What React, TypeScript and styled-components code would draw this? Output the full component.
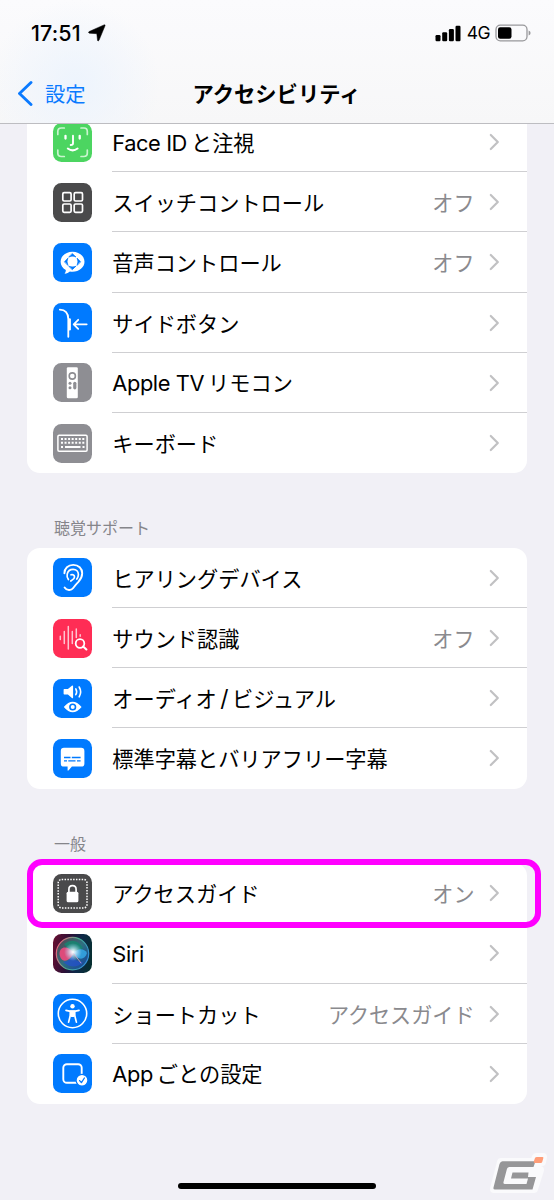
import React from "react";
import styled, { createGlobalStyle, css } from "styled-components";

const GlobalStyle = createGlobalStyle`
  *, *::before, *::after { box-sizing: border-box; }
  html, body { margin: 0; padding: 0; }
  body { background: #f1f0f6; }
`;

const jp = `"Noto Sans CJK JP", sans-serif`;
const latin = `Inter, "Noto Sans CJK JP", sans-serif`;

const Screen = styled.div`
  position: relative;
  width: 554px;
  height: 1200px;
  overflow: hidden;
  display: flex;
  flex-direction: column;
  background: #f1f0f6;
  color: #000;
  font-family: ${jp};
`;

const Header = styled.header`
  position: relative;
  z-index: 2;
  flex: none;
  height: 124px;
  border-bottom: 1px solid #bdbdc1;
  background: radial-gradient(circle at 75px 85px, #edf4fd 0, rgba(243, 247, 252, 0) 85px), linear-gradient(#fbfbfd, #f7f7f8);
`;

const StatusBar = styled.div`
  display: flex;
  align-items: center;
  justify-content: space-between;
  height: 66px;
  padding: 0 23px 0 31px;
`;

const Clock = styled.div`
  display: flex;
  align-items: center;
  gap: 7px;
  font: 500 21.5px/26px ${latin};
  letter-spacing: 0.1px;
`;

const Signals = styled.div`
  display: flex;
  align-items: center;
  font: 400 17.5px/24px ${latin};
`;

const Network = styled.span`
  margin: 0 5px 0 6px;
  letter-spacing: -0.6px;
`;

const NavBar = styled.nav`
  display: grid;
  grid-template-columns: 1fr auto 1fr;
  align-items: center;
  height: 54px;
  padding: 0 18px 0 17px;
`;

const Back = styled.a`
  display: flex;
  align-items: center;
  gap: 12px;
  color: #0a7aff;
  font-size: 20.3px;
  line-height: 30px;
`;

const Title = styled.h1`
  margin: 0;
  font: 700 21.3px/30px ${jp};
`;

const Content = styled.main`
  flex: 1;
  margin-top: -12px;
  padding: 0 27px;
`;

const Card = styled.section`
  border-radius: 13px;
  background: #fff;
`;

const SectionTitle = styled.h2`
  display: flex;
  align-items: flex-end;
  height: 74.65px;
  margin: 0;
  padding: 0 27px 7.6px;
  color: #85858a;
  font: 400 16px/26px ${jp};
`;

const Body = styled.div`
  flex: 1;
  display: flex;
  align-items: center;
  height: 100%;
  margin-left: 20px;
  padding: 1px 27px 0 0;
  border-bottom: 1px solid #cfcfd2;
`;

const Row = styled.div<{ $marked?: boolean }>`
  position: relative;
  display: flex;
  align-items: center;
  height: 60.2px;
  padding-left: 26.3px;
  &:last-child ${Body} { border-bottom-color: transparent; }
  ${(p) =>
    p.$marked &&
    css`
      & ${Body} { border-bottom-color: transparent; }
      &::after {
        content: "";
        position: absolute;
        top: -4.3px;
        left: 0;
        width: 513.5px;
        height: 69px;
        border: 6px solid #ff00ff;
        border-radius: 15px;
      }
    `}
`;

const Label = styled.span`
  flex: 1;
  font-size: 21.2px;
  line-height: 30px;
  white-space: nowrap;
`;

const Latin = styled.span<{ $gap?: number }>`
  font-family: ${latin};
  font-size: 21.8px;
  letter-spacing: -0.4px;
  margin-right: ${(p) => p.$gap ?? 0}px;
`;

const Slash = styled.span`
  margin: 0 3.5px;
  font-family: ${latin};
  font-size: 23px;
`;

const Value = styled.span`
  margin-right: 14.5px;
  color: #8a8a8e;
  font-size: 21.1px;
  line-height: 30px;
`;

const Tile = styled.svg<{ $bg: string }>`
  flex: none;
  display: block;
  width: 39px;
  height: 39px;
  border-radius: 8.5px;
  background: ${(p) => p.$bg};
`;

const HomeIndicator = styled.div`
  position: absolute;
  left: 178px;
  bottom: 11px;
  width: 198px;
  height: 6px;
  border-radius: 3px;
  background: #000;
`;

const Logo = styled.svg`
  position: absolute;
  right: 4px;
  bottom: 2px;
`;

const BLUE = "#007aff";
const DARK = "#4a4a4b";
const GRAY = "#8e8e93";

type IconProps = { bg: string; children: React.ReactNode };
const Icon = ({ bg, children }: IconProps) => (
  <Tile $bg={bg} viewBox="0 0 39 39" fill="none" stroke="#fff" strokeLinecap="round" strokeLinejoin="round">
    {children}
  </Tile>
);

const FaceIcon = () => (
  <Icon bg="#4cd561">
    <g strokeWidth="1.7" stroke="#c9f5cf">
      <path d="M4.8 11.5V8.5Q4.8 5 8.3 5H11.3M28 5h3Q34.3 5 34.3 8.5v3M34.3 27v3q0 3.5-3.5 3.5H28M11.3 33.5h-3q-3.5 0-3.5-3.5v-3" />
    </g>
    <path d="M12.5 12.8v2.8M26.7 12.8v2.8" strokeWidth="2.3" />
    <path d="M20 12.8v7.4q0 1.8-2.3 1.8" strokeWidth="1.9" />
    <path d="M14.8 25.5q4.8 3.8 9.8 0" strokeWidth="2" />
  </Icon>
);

const SwitchIcon = () => (
  <Icon bg={DARK}>
    <g strokeWidth="1.7">
      {[9.8, 21.2].map((x) =>
        [9.7, 21].map((y) => <rect key={`${x}-${y}`} x={x} y={y} width="8.3" height="8.3" rx="1.3" />)
      )}
    </g>
  </Icon>
);

const VoiceIcon = () => (
  <Icon bg={BLUE}>
    <path d="M19.5 8.8c6.7 0 12 4.3 12 9.9s-5.3 10-12 10c-1 0-1.800 0-2.600-.2-1.300 1.200-3 2-5.400 2.200.9-1.100 1.400-2.300 1.300-3.800-3.200-1.800-5.200-4.700-5.200-8.200 0-5.600 5.200-9.900 11.900-9.900z" fill="#fff" stroke="none" />
    <path d="M19.500 10.800l3.400 3.200h-6.800zM19.500 26.400l3.400-3.200h-6.800zM11.700 18.600l3.200-3.400v6.800zM27.300 18.600l-3.200-3.400v6.800z" fill={BLUE} stroke={BLUE} strokeWidth=".8" />
    <circle cx="19.500" cy="18.600" r="5" fill="#fff" stroke="none" />
  </Icon>
);

const SideButtonIcon = () => (
  <Icon bg={BLUE}>
    <path d="M6.800 6.600c5.200.1 8.400 2.800 8.500 9.400v17.800" strokeWidth="1.800" />
    <path d="M16.600 16.500v9.800" strokeWidth="2.600" />
    <path d="M33.700 21.300H21M25.200 16.800l-4.500 4.500 4.500 4.500" strokeWidth="1.800" />
  </Icon>
);

const RemoteIcon = () => (
  <Icon bg={GRAY}>
    <rect x="13.800" y="4.200" width="11" height="31" rx="1.300" fill="#fff" stroke="none" />
    <circle cx="19.300" cy="13" r="3.100" stroke={GRAY} strokeWidth="1.600" />
    <g fill={GRAY} stroke="none">
      <circle cx="17" cy="20.300" r="1.500" />
      <circle cx="17" cy="24.800" r="1.500" />
      <rect x="20.200" y="18.700" width="3.200" height="7.700" rx="1.600" />
    </g>
  </Icon>
);

const KeyboardIcon = () => (
  <Icon bg={GRAY}>
    <rect x="4.900" y="11.300" width="29.200" height="16" rx="1.200" strokeWidth="1.500" />
    <path d="M8 15h23.500M8 18.800h23.500" strokeWidth="2" strokeDasharray="2 1.550" strokeLinecap="butt" />
    <path d="M8 22.900h2M12 22.900h15.500M29.500 22.900h2" strokeWidth="2" strokeLinecap="butt" />
  </Icon>
);

const EarIcon = () => (
  <Icon bg={BLUE}>
    <path d="M11.400 15.300c0-5 3.700-8.400 8.900-8.400s8.900 3.500 8.900 8.400c0 3.800-1.600 6.200-3.800 8.600-2.800 2.800-4.200 4.800-5.400 6.400-1.800 2.400-6.400 2.400-8.400-.8" strokeWidth="1.900" />
    <path d="M15.400 21.500c-1.300-2-1.600-3.700-1.200-5.400.7-3 3-4.700 5.900-4.700 3.300 0 5.300 2.200 5.300 5.100 0 1.900-.7 3.300-1.600 4.600" strokeWidth="1.700" />
    <path d="M18 16.800c1.900-.7 3.500.3 3.500 2.100 0 1.800-1.600 2.500-3.700 4.100" strokeWidth="1.700" />
  </Icon>
);

const SoundIcon = () => (
  <Icon bg="#ff2d55">
    <path d="M7.300 17.300v3.200M11.300 12.500v12M15.300 7.500v22.500M19.300 12.500v12M23.300 10v8.500M27.200 15.700v1.500" strokeWidth="1.500" stroke="#ffc4d0" />
    <circle cx="27" cy="24.500" r="4.300" strokeWidth="1.800" />
    <path d="M30.200 27.500l3.200 3" strokeWidth="2.100" />
  </Icon>
);

const AudioVisualIcon = () => (
  <Icon bg={BLUE}>
    <path d="M11.300 10h3.600l4-3.300q1.200-.8 1.200.5v11.300q0 1.300-1.200.5l-4-3.500h-3.600q-.7 0-.7-.7v-4.100q0-.7.7-.7z" fill="#fff" stroke="none" />
    <path d="M22.800 9.900q1.700 2.900 0 5.800M26.200 8q2.900 4.900 0 9.800" strokeWidth="1.600" />
    <path d="M10.800 28q8.900-10.600 17.800 0-8.900 10.600-17.800 0z" fill="#fff" stroke="none" />
    <circle cx="19.700" cy="28" r="2.800" stroke={BLUE} strokeWidth="1.600" />
  </Icon>
);

const CaptionIcon = () => (
  <Icon bg={BLUE}>
    <path d="M11 8.800h17.200q3.200 0 3.200 3.200V24.400q0 3.200-3.200 3.200H18.900l-3.200 3.600q-1.100 1.100-1.100-.3v-3.300h-3.600q-3.200 0-3.200-3.200v-12.400q0-3.200 3.200-3.200z" fill="#fff" stroke="none" />
    <path d="M11 18.500h6.500M18.800 18.500h8.800M11 21.900h3M15.300 21.900h7.200M24 21.900h3.600" stroke={BLUE} strokeWidth="1.300" strokeLinecap="butt" />
  </Icon>
);

const GuidedIcon = () => (
  <Icon bg={DARK}>
    <rect x="5.200" y="5.400" width="28.800" height="28.600" rx="3.500" strokeWidth="1.500" strokeDasharray="1.500 1.350" strokeLinecap="butt" />
    <rect x="13.600" y="17.800" width="11.800" height="10.400" rx="1.500" fill="#fff" stroke="none" />
    <path d="M15.900 18v-2.700q0-3.700 3.600-3.700t3.600 3.700V18" strokeWidth="1.700" />
  </Icon>
);

const SiriIcon = () => (
  <Icon bg="linear-gradient(100deg, #6b0f30 0, #2a1038 40%, #0c2948 65%, #06302c 100%)">
    <defs>
      <radialGradient id="glow">
        <stop offset="0" stopColor="#fff" />
        <stop offset=".28" stopColor="#e2f5ff" stopOpacity=".8" />
        <stop offset="1" stopColor="#9fdcff" stopOpacity="0" />
      </radialGradient>
      <linearGradient id="orb" x1="0" y1="0" x2="1" y2="1">
        <stop offset="0" stopColor="#5b4048" />
        <stop offset=".5" stopColor="#2f7080" />
        <stop offset="1" stopColor="#123fa0" />
      </linearGradient>
      <linearGradient id="ring" x1="0" y1="0.3" x2="1" y2=".7">
        <stop offset="0" stopColor="#f0627c" />
        <stop offset=".5" stopColor="#48b08c" />
        <stop offset="1" stopColor="#338ddd" />
      </linearGradient>
    </defs>
    <circle cx="19.500" cy="19.600" r="16.200" fill="url(#orb)" stroke="url(#ring)" strokeWidth="1.200" />
    <path d="M11 10q11-8 19 4l-10 6z" fill="#128a70" fillOpacity=".75" stroke="none" />
    <path d="M10 28q8-1 9-8 2 8 11 8-9 9-20 0z" fill="#2450d0" fillOpacity=".7" stroke="none" />
    <path d="M6.500 20c0-8 8-9 14.500-1-5 9-13 11-14.500 1z" fill="#f0487c" fillOpacity=".9" stroke="none" />
    <path d="M20 19c5-5 11-5 14 0-2 7-9 8-14 0z" fill="#35a8e8" fillOpacity=".85" stroke="none" />
    <circle cx="20" cy="18" r="9" fill="url(#glow)" stroke="none" />
    <path d="M21 20l7 9" stroke="#e8a9c8" strokeOpacity=".7" strokeWidth="1" />
  </Icon>
);

const ShortcutIcon = () => (
  <Icon bg={BLUE}>
    <circle cx="19.500" cy="19.500" r="14.200" strokeWidth="1.600" />
    <circle cx="19.500" cy="12.300" r="2.200" fill="#fff" stroke="none" />
    <path d="M13 16.300l4.600 1h3.800l4.600-1" strokeWidth="1.700" />
    <path d="M17.300 17h4.400l.1 4.800 1.600 6.300M17.300 17l-.1 4.800-1.600 6.300" strokeWidth="1.700" />
    <path d="M17.400 17.300h4.200v4.500l-.8 1.200h-2.600l-.8-1.200z" fill="#fff" stroke="none" />
  </Icon>
);

const PerAppIcon = () => (
  <Icon bg={BLUE}>
    <rect x="10.300" y="10.200" width="18.400" height="18.600" rx="3.600" strokeWidth="1.900" />
    <circle cx="29" cy="26.200" r="5.900" fill="#fff" stroke={BLUE} strokeWidth="1.200" />
    <path d="M26.600 26.600l1.800 2 3-4.600" stroke={BLUE} strokeWidth="1.300" />
  </Icon>
);

const Chevron = () => (
  <svg width="11" height="18" viewBox="0 0 11 18" fill="none" stroke="#c1c1c3" strokeWidth="2.200" strokeLinecap="round" strokeLinejoin="round">
    <path d="M1.800 2l7 7-7 7" />
  </svg>
);

type ItemProps = { icon: React.ReactNode; value?: string; marked?: boolean; children: React.ReactNode };
const Item = ({ icon, value, marked, children }: ItemProps) => (
  <Row $marked={marked}>
    {icon}
    <Body>
      <Label>{children}</Label>
      {value && <Value>{value}</Value>}
      <Chevron />
    </Body>
  </Row>
);

export default function App() {
  return (
    <Screen>
      <GlobalStyle />
      <Header>
        <StatusBar>
          <Clock>
            17:51
            <svg width="18" height="18" viewBox="0 0 18 18">
              <path d="M16 .9Q17.500.4 17 1.800L11 16.300q-1 1.600-1.500-.1L8.800 9.700 1.400 9.200Q-.4 8.500 1.200 7.500z" fill="#000" stroke="#000" strokeWidth=".5" />
            </svg>
          </Clock>
          <Signals>
            <svg width="26" height="17" viewBox="0 0 26 17">
              <rect x="0.500" y="10" width="5" height="6.300" rx="1.200" />
              <rect x="7.200" y="7.300" width="5" height="9" rx="1.200" />
              <rect x="13.900" y="4" width="5" height="12.300" rx="1.200" />
              <rect x="20.500" y=".7" width="5" height="15.600" rx="1.200" />
            </svg>
            <Network>4G</Network>
            <svg width="36" height="18" viewBox="0 0 36 18">
              <rect x="1" y="1.200" width="31" height="15.600" rx="4.300" fill="none" stroke="#98989b" strokeWidth="1.300" />
              <rect x="3" y="3.200" width="13.500" height="11.600" rx="2.200" />
              <path d="M33.600 6.500q2 .8 2 2.500t-2 2.500z" fill="#98989b" />
            </svg>
          </Signals>
        </StatusBar>
        <NavBar>
          <Back>
            <svg width="16" height="26" viewBox="0 0 16 26" fill="none" stroke="#0a7aff" strokeWidth="2.900" strokeLinecap="round" strokeLinejoin="round">
              <path d="M14 2.500L2.500 13.500 14 24.500" />
            </svg>
            設定
          </Back>
          <Title>アクセシビリティ</Title>
        </NavBar>
      </Header>
      <Content>
        <Card>
          <Item icon={<FaceIcon />}><Latin $gap={4}>Face ID</Latin>と注視</Item>
          <Item icon={<SwitchIcon />} value="オフ">スイッチコントロール</Item>
          <Item icon={<VoiceIcon />} value="オフ">音声コントロール</Item>
          <Item icon={<SideButtonIcon />}>サイドボタン</Item>
          <Item icon={<RemoteIcon />}><Latin $gap={4}>Apple TV</Latin>リモコン</Item>
          <Item icon={<KeyboardIcon />}>キーボード</Item>
        </Card>
        <SectionTitle>聴覚サポート</SectionTitle>
        <Card>
          <Item icon={<EarIcon />}>ヒアリングデバイス</Item>
          <Item icon={<SoundIcon />} value="オフ">サウンド認識</Item>
          <Item icon={<AudioVisualIcon />}>オーディオ<Slash>/</Slash>ビジュアル</Item>
          <Item icon={<CaptionIcon />}>標準字幕とバリアフリー字幕</Item>
        </Card>
        <SectionTitle>一般</SectionTitle>
        <Card>
          <Item icon={<GuidedIcon />} value="オン" marked>アクセスガイド</Item>
          <Item icon={<SiriIcon />}><Latin>Siri</Latin></Item>
          <Item icon={<ShortcutIcon />} value="アクセスガイド">ショートカット</Item>
          <Item icon={<PerAppIcon />}><Latin $gap={4}>App</Latin>ごとの設定</Item>
        </Card>
      </Content>
      <HomeIndicator />
      <Logo width="60" height="47" viewBox="490 1151 60 47" strokeLinejoin="round">
        <g stroke="#fafafc" strokeWidth="8" fill="#fafafc">
          <path d="M501 1162H534L532 1170H540L534 1189H494Z" />
          <path d="M536 1157h7l-1 5h-8z" />
        </g>
        <path d="M502.500 1161.300H535.500L533.500 1167H509.500Q507.500 1167 507 1168.700L503.500 1182Q503 1184 505 1184H526.500L528 1178.500H511L512.500 1172.500H528.500L528 1177H536L532.500 1189.500H495Q493 1189.500 493.500 1187.500L499.500 1164Q500.500 1161.300 502.500 1161.300Z" fill="#969698" />
        <path d="M537 1157h5.500q1.200 0 .8 1.200l-1 3.500q-.3 1.200-1.600 1.200h-6q-1.300 0-.9-1.300l1-3.200q.4-1.400 2.200-1.400z" fill="#ff9d78" />
      </Logo>
    </Screen>
  );
}
